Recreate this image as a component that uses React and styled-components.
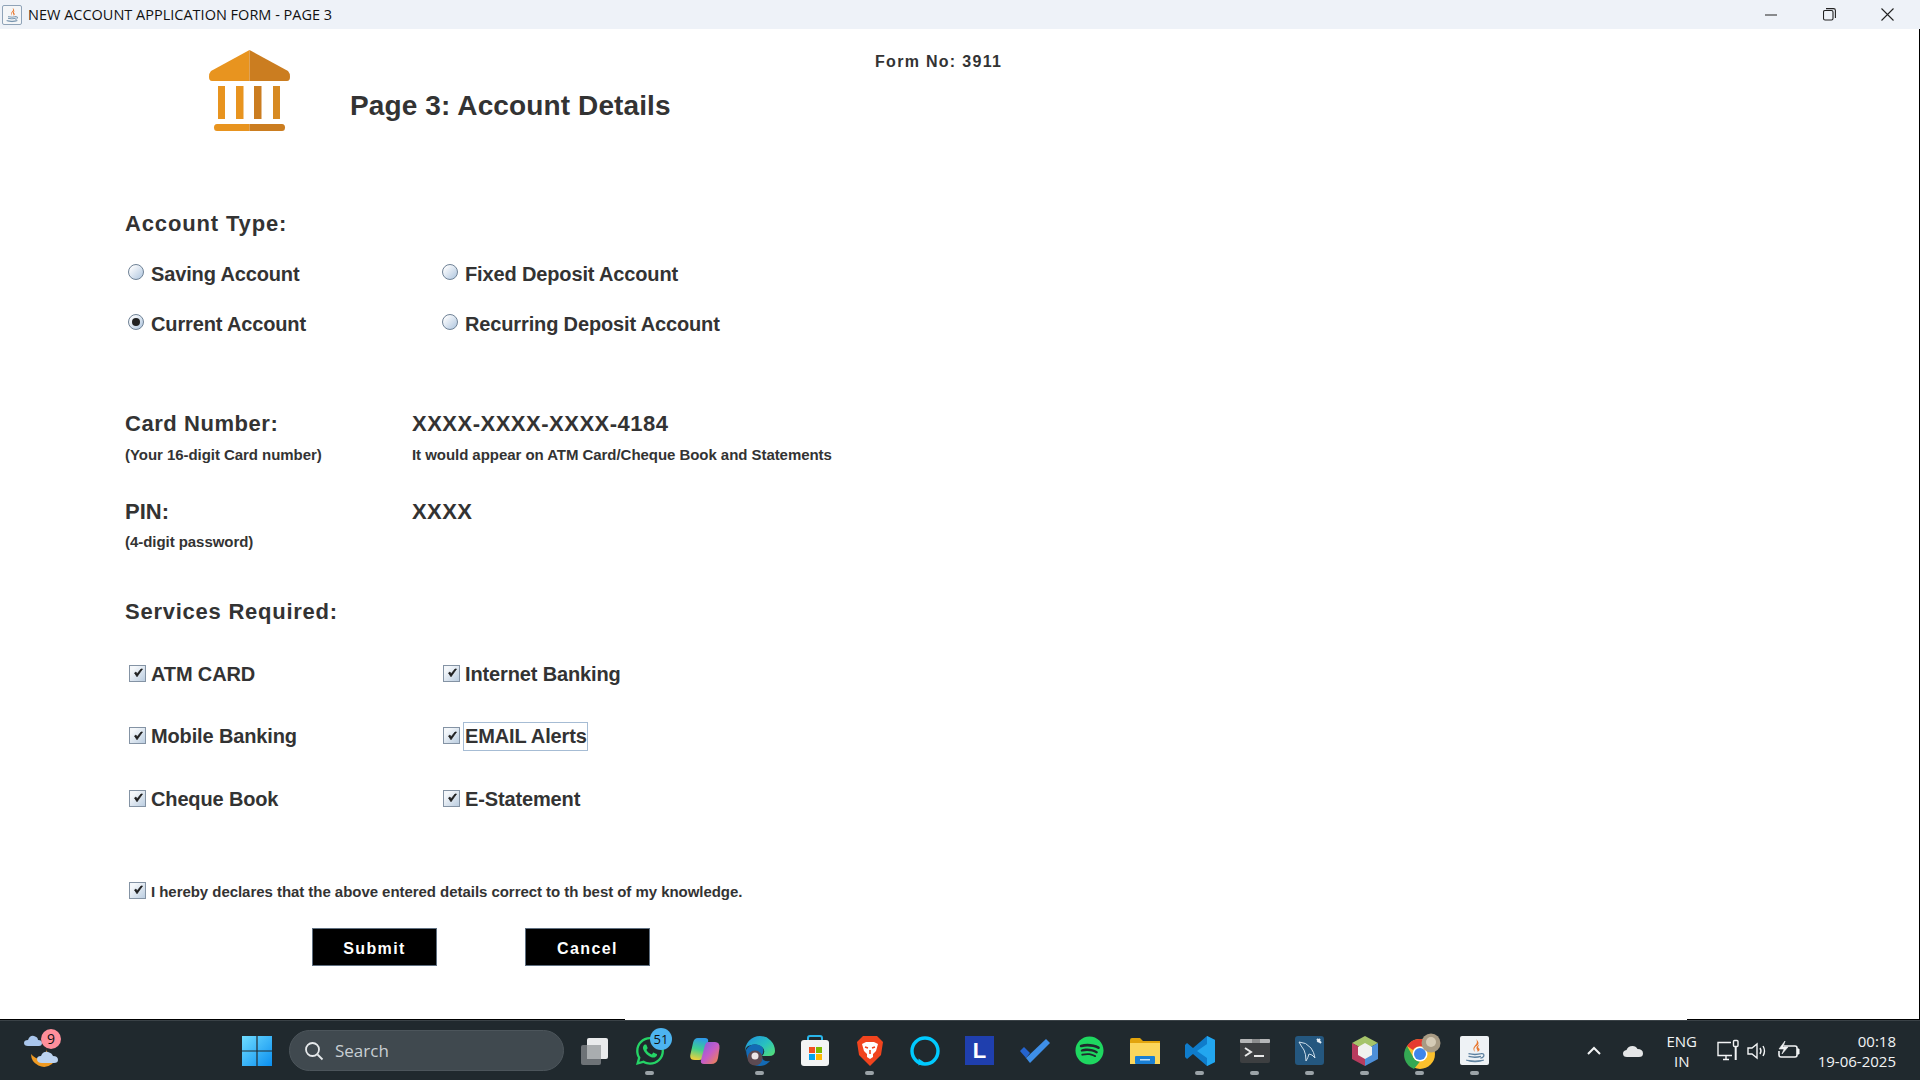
import React from 'react';
import styled, { createGlobalStyle } from 'styled-components';
import { FaWhatsapp, FaSpotify } from 'react-icons/fa';

const GlobalStyle = createGlobalStyle`
  html, body {
    margin: 0;
    padding: 0;
    background: #fff;
    overflow: hidden;
  }
`;

const Page = styled.div`
  width: 1920px;
  height: 1080px;
  display: flex;
  flex-direction: column;
  font-family: "Liberation Sans", Arial, sans-serif;
  background: #fff;
`;

const TitleBar = styled.div`
  height: 29px;
  flex: none;
  display: flex;
  align-items: center;
  background: #eef2f8;
  padding: 0 4px 0 2px;
`;

const TitleIcon = styled.div`
  width: 20px;
  height: 20px;
  display: flex;
  align-items: center;
  justify-content: center;
  background: #f4f6f8;
  border: 1px solid #8fa3b8;
  border-radius: 2px;
  box-sizing: border-box;
`;

const TitleText = styled.span`
  font-family: "Open Sans", sans-serif;
  font-size: 14.5px;
  color: #111;
  margin-left: 6px;
  flex: 1;
`;

const WinButton = styled.div`
  width: 58px;
  height: 29px;
  display: flex;
  align-items: center;
  justify-content: center;
`;

const Main = styled.div`
  flex: 1;
  border-right: 1px solid #000;
`;

const Header = styled.div`
  height: 180px;
  display: flex;
  align-items: flex-start;
  padding: 21px 0 0 209px;
  box-sizing: border-box;
`;

const Logo = styled.svg`
  width: 81px;
  height: 81px;
  flex: none;
`;

const PageTitle = styled.h1`
  margin: 40px 0 0 60px;
  font-size: 28px;
  line-height: 32px;
  font-weight: 700;
  color: #333;
  letter-spacing: 0.12px;
  width: 525px;
`;

const FormNo = styled.div`
  margin-top: 2px;
  font-size: 16px;
  line-height: 20px;
  font-weight: 700;
  color: #333;
  letter-spacing: 1.3px;
`;

const Form = styled.div`
  padding-left: 125px;
`;

const Heading = styled.div`
  height: 30px;
  line-height: 30px;
  margin-top: ${({ $top }) => $top || 0}px;
  font-size: 22px;
  font-weight: 700;
  color: #333;
  letter-spacing: ${({ $spacing }) => $spacing}px;
`;

const OptionGrid = styled.div`
  display: grid;
  grid-template-columns: 314px 1fr;
  grid-auto-rows: 30px;
  row-gap: ${({ $gap }) => $gap}px;
  margin-top: ${({ $top }) => $top}px;
`;

const Option = styled.div`
  display: flex;
  align-items: center;
  padding-left: 4px;
  font-size: ${({ $size }) => $size || 20}px;
  font-weight: 700;
  color: #333;
`;

const OptionLabel = styled.span`
  margin-left: ${({ $gap }) => $gap}px;
  white-space: nowrap;
  letter-spacing: ${({ $spacing }) => $spacing ?? -0.14}px;
  ${({ $boxed }) => $boxed && `
    border: 1px solid #a6bcd4;
    padding: 2px 0 2px 1px;
  `}
`;

const RadioDot = styled.span`
  width: 16px;
  height: 16px;
  margin: -5px 0 0 -1px;
  flex: none;
  border-radius: 50%;
  box-sizing: border-box;
  border: 1px solid #6f8296;
  background: linear-gradient(135deg, #f6f8fb 20%, #b2c8e0 95%);
  display: flex;
  align-items: center;
  justify-content: center;

  &::after {
    content: '';
    width: 8px;
    height: 8px;
    border-radius: 50%;
    background: ${({ $on }) => ($on ? '#222' : 'transparent')};
  }
`;

const CheckBox = styled.span`
  width: 17px;
  height: 17px;
  margin: -2px 0 0;
  flex: none;
  box-sizing: border-box;
  border: 1px solid #8493a4;
  background: linear-gradient(135deg, #f4f7fa 20%, #bfd0e2 95%);
  display: flex;
  align-items: center;
  justify-content: center;
`;

const DetailRow = styled.div`
  display: grid;
  grid-template-columns: 287px 1fr;
  height: 30px;
  align-items: center;
  margin-top: ${({ $top }) => $top}px;
`;

const DetailValue = styled.div`
  font-size: 22px;
  font-weight: 700;
  color: #333;
  letter-spacing: ${({ $spacing }) => $spacing}px;
`;

const NoteRow = styled.div`
  display: grid;
  grid-template-columns: 287px 1fr;
  height: 20px;
  align-items: center;
  margin-top: ${({ $top }) => $top}px;
  font-size: 15px;
  letter-spacing: -0.05px;
  font-weight: 700;
  color: #333;
`;

const ButtonRow = styled.div`
  display: flex;
  gap: 88px;
  margin: 22px 0 0 187px;
`;

const BlackButton = styled.button`
  width: 125px;
  height: 38px;
  padding: 4px 0 0;
  background: #000;
  border: 1px solid #5f6f80;
  color: #fff;
  font-family: inherit;
  font-size: 16px;
  font-weight: 700;
  letter-spacing: 1.4px;
`;

const BottomEdge = styled.div`
  height: 1px;
  flex: none;
  display: flex;
  justify-content: space-between;
  background: #fff;
`;

const EdgePiece = styled.div`
  width: ${({ $w }) => $w}px;
  background: #000;
`;

const TaskBar = styled.div`
  height: 60px;
  flex: none;
  box-sizing: border-box;
  border-top: 1px solid #3a4247;
  background: #20292e;
  display: flex;
  align-items: center;
  color: #fff;
  font-family: "Open Sans", sans-serif;
`;

const Weather = styled.div`
  position: relative;
  width: 42px;
  height: 40px;
  margin: 0 0 4px 22px;
  flex: none;
`;

const Badge = styled.span`
  position: absolute;
  top: ${({ $top }) => $top}px;
  right: ${({ $right }) => $right}px;
  min-width: ${({ $w }) => $w}px;
  height: ${({ $w }) => $w}px;
  border-radius: 50%;
  background: ${({ $bg }) => $bg};
  color: #111;
  font-size: ${({ $size }) => $size}px;
  line-height: ${({ $w }) => $w}px;
  text-align: center;
`;

const StartLogo = styled.svg`
  width: 30px;
  height: 30px;
  margin-left: 178px;
  flex: none;
`;

const SearchBox = styled.div`
  width: 275px;
  height: 41px;
  margin-left: 17px;
  box-sizing: border-box;
  padding-left: 14px;
  border-radius: 21px;
  border: 1px solid #4c555b;
  background: #40494f;
  display: flex;
  align-items: center;
  gap: 11px;
  font-size: 17px;
  color: #c9cfd3;
  flex: none;
`;

const AppList = styled.div`
  display: flex;
  margin-left: 3px;
  flex: none;
`;

const AppSlot = styled.div`
  position: relative;
  width: 55px;
  height: 59px;
  display: flex;
  align-items: center;
  justify-content: center;
`;

const RunDot = styled.span`
  position: absolute;
  bottom: 5px;
  left: 23px;
  width: 9px;
  height: 4px;
  border-radius: 2px;
  background: #9ba3a8;
`;

const Tile = styled.div`
  width: 29px;
  height: 29px;
  display: flex;
  align-items: center;
  justify-content: center;
  background: ${({ $bg }) => $bg};
  border-radius: ${({ $radius }) => $radius || 0}px;
  color: #fff;
  font-family: "Liberation Sans", sans-serif;
  font-weight: 700;
  font-size: 22px;
`;

const Tray = styled.div`
  margin-left: auto;
  display: flex;
  align-items: center;
  padding-right: 24px;
`;

const TrayIcon = styled.svg`
  width: ${({ $w }) => $w || 24}px;
  height: 24px;
  margin-right: ${({ $gap }) => $gap || 0}px;
  flex: none;
`;

const LangBlock = styled.div`
  width: 34px;
  margin-right: 17px;
  text-align: center;
  font-size: 15px;
  line-height: 20px;
  color: #f2f4f5;
`;

const Clock = styled.div`
  margin-left: 18px;
  text-align: right;
  font-size: 15px;
  line-height: 20px;
  color: #f2f4f5;
`;

const CheckMark = () => (
  <svg width="12" height="12" viewBox="0 0 12 12">
    <path d="M2.5 6 L5 9.8 L10.5 2 L9 2 L5 7 L4 5 Z" fill="#1d1d1d" stroke="#1d1d1d" strokeWidth="0.7" />
  </svg>
);

const Check = ({ label, boxed }) => (
  <Option>
    <CheckBox><CheckMark /></CheckBox>
    <OptionLabel $boxed={boxed} $gap={boxed ? 3 : 5}>{label}</OptionLabel>
  </Option>
);

const Radio = ({ label, on }) => (
  <Option>
    <RadioDot $on={on} />
    <OptionLabel $gap={7}>{label}</OptionLabel>
  </Option>
);

const BankLogo = () => (
  <Logo viewBox="0 0 81 81">
    <path d="M40.5 0 L2 21 Q0 23 0 27 Q0 31 3 31 L40.5 31 Z" fill="#e8941f" />
    <path d="M40.5 0 L79 21 Q81 23 81 27 Q81 31 78 31 L40.5 31 Z" fill="#cb7d20" />
    <rect x="9" y="36" width="7" height="33" fill="#e8941f" />
    <rect x="27" y="36" width="7.5" height="33" fill="#e8941f" />
    <rect x="45" y="36" width="7.5" height="33" fill="#cb7d20" />
    <rect x="64" y="36" width="7" height="33" fill="#d78a22" />
    <path d="M40.5 74 L8 74 Q5 74 5 77.5 Q5 81 8 81 L40.5 81 Z" fill="#e8941f" />
    <path d="M40.5 74 L73 74 Q76 74 76 77.5 Q76 81 73 81 L40.5 81 Z" fill="#cb7d20" />
  </Logo>
);

const WeatherIcon = () => (
  <svg width="42" height="40" viewBox="0 0 42 40">
    <path d="M9 25 A13 13 0 0 0 30 35 L34 30 A13 13 0 0 1 24 18 Q26 24 20 30 Q14 31 9 25 Z" fill="#ef9a22" />
    <path d="M20 34 Q15 34 15 30 Q15 27 19 27 Q21 22 26 23 Q30 24 31 27 Q36 27 36 31 Q36 34 32 34 Z" fill="#bcd3f0" />
    <path d="M6 17 Q2 17 2 14 Q2 11 6 11 Q8 6 12 7 Q16 8 16 11 Q20 11 20 14 Q20 17 17 17 Z" fill="#a9c6ec" />
  </svg>
);

const JavaCup = ({ size }) => (
  <svg width={size} height={size} viewBox="0 0 24 24">
    <path d="M13 1 Q15 4 12 7 Q9 10 12 13 Q10 9 14 7 Q17 5 13 1 Z" fill="#e8772e" />
    <path d="M16 6 Q12 8 14 11 Q15 12 14 13 Q18 11 15 9 Q14.5 8 16 6 Z" fill="#e8772e" />
    <path d="M6 14.5 Q12 16 18 14.5 M6 17 Q12 18.5 17.5 17 M17.5 14.5 Q21 14 20 17 Q19 18.5 17 18.5" fill="none" stroke="#5b7f9e" strokeWidth="1.2" />
    <path d="M4 20.5 Q12 23.5 20 20.5 Q12 22 4 20.5 Z" fill="#5b7f9e" stroke="#5b7f9e" strokeWidth="0.8" />
  </svg>
);

const TaskView = () => (
  <svg width="32" height="32" viewBox="0 0 32 32">
    <rect x="2" y="10" width="20" height="20" rx="2" fill="#6d7276" />
    <rect x="8" y="3" width="21" height="21" rx="2" fill="#e9ebec" />
    <rect x="8" y="10" width="14" height="14" fill="#a9adaf" />
  </svg>
);

const Copilot = () => (
  <svg width="30" height="26" viewBox="0 0 30 26">
    <defs>
      <linearGradient id="cpA" x1="0" y1="0" x2="1" y2="1">
        <stop offset="0" stopColor="#7a5fe0" />
        <stop offset="0.5" stopColor="#c65cc8" />
        <stop offset="1" stopColor="#f58a3c" />
      </linearGradient>
      <linearGradient id="cpB" x1="0.5" y1="0" x2="0.3" y2="1">
        <stop offset="0" stopColor="#2f9ae8" />
        <stop offset="0.5" stopColor="#3ed08f" />
        <stop offset="1" stopColor="#f4d03a" />
      </linearGradient>
    </defs>
    <path d="M8 0 H15 Q19 0 18 4 L14 19 Q13 22 9 22 H5 Q-1 22 0.5 16 L3 5 Q4 0 8 0 Z" fill="url(#cpB)" />
    <path d="M18 4 H25 Q30 4 29.5 10 L28 20 Q27 26 21 26 H14 Q10 26 11 22 L15 7 Q16 4 18 4 Z" fill="url(#cpA)" />
  </svg>
);

const Edge = () => (
  <svg width="30" height="30" viewBox="0 0 30 30">
    <defs>
      <linearGradient id="edA" x1="0" y1="0" x2="1" y2="0.8">
        <stop offset="0" stopColor="#1f8fe0" />
        <stop offset="0.6" stopColor="#28c0c0" />
        <stop offset="1" stopColor="#4fdc80" />
      </linearGradient>
    </defs>
    <path d="M15 0 A15 15 0 0 1 30 15 Q30 20 24 20 L17 20 Q21 16 18 12 Q12 6 3 10 Q0 12 0 16 A15 15 0 0 1 15 0 Z" fill="url(#edA)" />
    <path d="M1 14 Q6 6 14 9 Q21 12 17 19 Q16 26 25 25 Q21 30 15 30 Q2 30 1 14 Z" fill="#136ab5" />
    <circle cx="10" cy="22" r="7.5" fill="#5c4a52" />
    <circle cx="10" cy="20" r="3.5" fill="#ece6e8" />
  </svg>
);

const Store = () => (
  <svg width="30" height="32" viewBox="0 0 30 32">
    <path d="M8 6 V3 Q8 1 10 1 H20 Q22 1 22 3 V6" fill="none" stroke="#29b6ea" strokeWidth="2" />
    <rect x="1" y="5" width="28" height="26" rx="3" fill="#f3f4f4" />
    <rect x="9" y="12" width="6" height="6" fill="#f25022" />
    <rect x="16" y="12" width="6" height="6" fill="#7fba00" />
    <rect x="9" y="19" width="6" height="6" fill="#00a4ef" />
    <rect x="16" y="19" width="6" height="6" fill="#ffb900" />
  </svg>
);

const Brave = () => (
  <svg width="28" height="32" viewBox="0 0 28 32">
    <path d="M7 1 H21 L27 7 L25 20 L14 31 L3 20 L1 7 Z" fill="#f1441e" />
    <path d="M6 9 L10 7 H18 L22 9 L20 16 L17 19 L17 22 L14 24 L11 22 L11 19 L8 16 Z" fill="#fff" />
    <path d="M9 12 L12 13 M19 12 L16 13 M14 15 V19" stroke="#f1441e" strokeWidth="1.6" />
  </svg>
);

const Alexa = () => (
  <svg width="30" height="30" viewBox="0 0 30 30">
    <circle cx="15" cy="15" r="13" fill="none" stroke="#00caff" strokeWidth="3.4" />
    <path d="M8.5 29.5 L8.5 22.5 L14.5 26.5 Z" fill="#00caff" />
  </svg>
);

const Tasks = () => (
  <svg width="32" height="26" viewBox="0 0 32 26">
    <path d="M1 13 L5 9 L11 15 L7 20 Z" fill="#2564cf" />
    <path d="M7 20 L11 25 L31 5 L27 1 Z" fill="#3e8fe8" />
  </svg>
);

const Folder = () => (
  <svg width="32" height="28" viewBox="0 0 32 28">
    <path d="M1 3 Q1 1 3 1 H11 L14 4 H31 V27 H1 Z" fill="#e2a40c" />
    <rect x="1" y="6" width="30" height="21" fill="#fbd65c" />
    <rect x="6" y="19" width="20" height="8" rx="1" fill="#1a7fd4" />
    <rect x="11" y="22" width="10" height="1.5" fill="#bfe0fb" />
  </svg>
);

const VSCode = () => (
  <svg width="32" height="32" viewBox="0 0 32 32">
    <path d="M23 1 L31 5 V27 L23 31 L9 19 L3 24 L1 22 V10 L3 8 L9 13 Z" fill="#0f7ccb" />
    <path d="M23 1 L31 5 V27 L23 31 Z M23 9 L13 16 L23 23 Z" fill="#22a6ef" fillRule="evenodd" />
  </svg>
);

const Terminal = () => (
  <svg width="30" height="24" viewBox="0 0 30 24">
    <rect width="30" height="24" rx="2" fill="#3d3f41" />
    <rect width="30" height="4" rx="1" fill="#b5b6b7" />
    <rect x="12" width="8" height="4" fill="#8c8d8e" />
    <path d="M5 9 L11 13 L5 17" fill="none" stroke="#e8e8e8" strokeWidth="2" />
    <rect x="14" y="16" width="10" height="2" fill="#e8e8e8" />
  </svg>
);

const MySqlTile = () => (
  <svg width="29" height="29" viewBox="0 0 29 29">
    <rect width="29" height="29" rx="3" fill="#24577f" />
    <path d="M4 6 Q11 6 16 12 Q19 16 20 22 Q17 18 14 18 Q13 22 11 25 Q11 18 9 14 Q6 10 4 6 Z" fill="none" stroke="#cfe0ec" strokeWidth="1" />
    <path d="M22 3 L26 7 M25 3 L22.5 6" stroke="#e6eff6" strokeWidth="2" />
  </svg>
);

const NetBeans = () => (
  <svg width="28" height="32" viewBox="0 0 28 32">
    <path d="M14 1 L27 8 L14 15 L1 8 Z" fill="#a6c46a" />
    <path d="M1 8 L14 15 V31 L1 24 Z" fill="#b83b5e" />
    <path d="M27 8 L14 15 V31 L27 24 Z" fill="#4e8fd8" />
    <path d="M14 8 L21 12 V20 L14 24 L7 20 V12 Z" fill="#f1f1ee" />
  </svg>
);

const Chrome = () => (
  <svg width="42" height="36" viewBox="-6 0 42 36">
    <circle cx="15" cy="21" r="15" fill="#fbc02d" />
    <path d="M15 6 A15 15 0 0 1 28 13.5 H15 A7.5 7.5 0 0 0 8 17 L2 13 A15 15 0 0 1 15 6 Z" fill="#e53b30" />
    <path d="M2 13 L8.5 24.5 A7.5 7.5 0 0 0 15 28.5 L9 36 A15 15 0 0 1 2 13 Z" fill="#34a853" />
    <circle cx="15" cy="21" r="7.5" fill="#fff" />
    <circle cx="15" cy="21" r="6" fill="#3f86ea" />
    <circle cx="26" cy="10" r="9.5" fill="#a89b84" />
    <circle cx="26" cy="9" r="5" fill="#d5cbb6" />
  </svg>
);

const apps = [
  { key: 'task', icon: <TaskView /> },
  { key: 'whatsapp', icon: <FaWhatsapp color="#25d366" size={32} />, run: true, badge: '51' },
  { key: 'copilot', icon: <Copilot /> },
  { key: 'edge', icon: <Edge />, run: true },
  { key: 'store', icon: <Store /> },
  { key: 'brave', icon: <Brave />, run: true },
  { key: 'alexa', icon: <Alexa /> },
  { key: 'lens', icon: <Tile $bg="#1f3fae">L</Tile> },
  { key: 'tasks', icon: <Tasks /> },
  { key: 'spotify', icon: <FaSpotify color="#1ed760" size={29} /> },
  { key: 'folder', icon: <Folder /> },
  { key: 'vscode', icon: <VSCode />, run: true },
  { key: 'terminal', icon: <Terminal />, run: true },
  { key: 'mysql', icon: <MySqlTile />, run: true },
  { key: 'netbeans', icon: <NetBeans />, run: true },
  { key: 'chrome', icon: <Chrome />, run: true },
  { key: 'java', icon: <Tile $bg="#eef2f5" $radius={2}><JavaCup size={26} /></Tile>, run: true },
];

export default function App() {
  return (
    <Page>
      <GlobalStyle />
      <TitleBar>
        <TitleIcon><JavaCup size={16} /></TitleIcon>
        <TitleText>NEW ACCOUNT APPLICATION FORM - PAGE 3</TitleText>
        <WinButton>
          <svg width="12" height="12" viewBox="0 0 12 12">
            <path d="M0 6 H12" stroke="#222" strokeWidth="1" />
          </svg>
        </WinButton>
        <WinButton>
          <svg width="13" height="13" viewBox="0 0 13 13" fill="none" stroke="#222" strokeWidth="1.1">
            <rect x="0.5" y="2.5" width="9.5" height="9.5" rx="1.5" />
            <path d="M3 0.6 H10.5 Q12.4 0.6 12.4 2.5 V10" />
          </svg>
        </WinButton>
        <WinButton>
          <svg width="13" height="13" viewBox="0 0 13 13">
            <path d="M0.5 0.5 L12.5 12.5 M12.5 0.5 L0.5 12.5" stroke="#222" strokeWidth="1.1" />
          </svg>
        </WinButton>
      </TitleBar>

      <Main>
        <Header>
          <BankLogo />
          <PageTitle>Page 3: Account Details</PageTitle>
          <FormNo>Form No: 3911</FormNo>
        </Header>

        <Form>
          <Heading $spacing={0.85}>Account Type:</Heading>
          <OptionGrid $gap={20} $top={20}>
            <Radio label="Saving Account" />
            <Radio label="Fixed Deposit Account" />
            <Radio label="Current Account" on />
            <Radio label="Recurring Deposit Account" />
          </OptionGrid>

          <DetailRow $top={70}>
            <Heading $spacing={0.55}>Card Number:</Heading>
            <DetailValue $spacing={0.5}>XXXX-XXXX-XXXX-4184</DetailValue>
          </DetailRow>
          <NoteRow $top={5}>
            <span>(Your 16-digit Card number)</span>
            <span>It would appear on ATM Card/Cheque Book and Statements</span>
          </NoteRow>

          <DetailRow $top={33}>
            <Heading $spacing={0}>PIN:</Heading>
            <DetailValue $spacing={0.4}>XXXX</DetailValue>
          </DetailRow>
          <NoteRow $top={4}>
            <span>(4-digit password)</span>
          </NoteRow>

          <Heading $top={46} $spacing={0.75}>Services Required:</Heading>

          <OptionGrid $gap={32.5} $top={32}>
            <Check label="ATM CARD" />
            <Check label="Internet Banking" />
            <Check label="Mobile Banking" />
            <Check label="EMAIL Alerts" boxed />
            <Check label="Cheque Book" />
            <Check label="E-Statement" />
          </OptionGrid>

          <OptionGrid $gap={0} $top={62}>
            <Option $size={15}>
              <CheckBox><CheckMark /></CheckBox>
              <OptionLabel $gap={5} $spacing={-0.045}>
                I hereby declares that the above entered details correct to th best of my knowledge.
              </OptionLabel>
            </Option>
          </OptionGrid>

          <ButtonRow>
            <BlackButton>Submit</BlackButton>
            <BlackButton>Cancel</BlackButton>
          </ButtonRow>
        </Form>
      </Main>

      <BottomEdge>
        <EdgePiece $w={625} />
        <EdgePiece $w={233} />
      </BottomEdge>

      <TaskBar>
        <Weather>
          <WeatherIcon />
          <Badge $top={0} $right={3} $w={20} $bg="#ff8f9b" $size={14}>9</Badge>
        </Weather>

        <StartLogo viewBox="0 0 30 30">
          <defs>
            <linearGradient id="winA" x1="0" y1="0" x2="1" y2="1">
              <stop offset="0" stopColor="#6fdcff" />
              <stop offset="1" stopColor="#0a8ff0" />
            </linearGradient>
          </defs>
          <path d="M0 0 H14.4 V14.4 H0 Z M15.6 0 H30 V14.4 H15.6 Z M0 15.6 H14.4 V30 H0 Z M15.6 15.6 H30 V30 H15.6 Z" fill="url(#winA)" />
        </StartLogo>

        <SearchBox>
          <svg width="20" height="20" viewBox="0 0 20 20" fill="none" stroke="#e6e9eb" strokeWidth="1.8">
            <circle cx="8.5" cy="8.5" r="6.5" />
            <path d="M13.5 13.5 L18.5 18.5" />
          </svg>
          Search
        </SearchBox>

        <AppList>
          {apps.map((app) => (
            <AppSlot key={app.key}>
              {app.icon}
              {app.badge && <Badge $top={7} $right={5} $w={22} $bg="#4db4f0" $size={13}>{app.badge}</Badge>}
              {app.run && <RunDot />}
            </AppSlot>
          ))}
        </AppList>

        <Tray>
          <TrayIcon $gap={15} viewBox="0 0 24 24">
            <path d="M6 15 L12 9 L18 15" fill="none" stroke="#f2f4f5" strokeWidth="2" />
          </TrayIcon>
          <TrayIcon $gap={20} viewBox="0 0 24 24">
            <path d="M6 18 Q2 18 2 14.5 Q2 11.5 5.5 11 Q7 7 11.5 7 Q15 7 16.5 10 Q22 10 22 14.5 Q22 18 18 18 Z" fill="#e4e6e7" />
          </TrayIcon>
          <LangBlock>ENG<br />IN</LangBlock>
          <TrayIcon $gap={5} viewBox="0 0 24 24" fill="none" stroke="#f2f4f5" strokeWidth="1.4">
            <path d="M15 3.5 H2 V16.5 H16 M7 20.5 H13 M10 17 V20.5" />
            <rect x="17.5" y="1.5" width="4.5" height="6" rx="1" />
            <path d="M19.7 8 V21" strokeWidth="2" />
          </TrayIcon>
          <TrayIcon $gap={7} viewBox="0 0 24 24" fill="none" stroke="#f2f4f5" strokeWidth="1.4">
            <path d="M3 9 H7 L12 5 V19 L7 15 H3 Z" />
            <path d="M15 9 Q17 12 15 15 M18 7 Q21 12 18 17" />
          </TrayIcon>
          <TrayIcon viewBox="0 0 24 24" fill="none" stroke="#f2f4f5" strokeWidth="1.6">
            <path d="M8 7 H19 Q21 7 21 9 V16 Q21 18 19 18 H5 Q3 18 3 16 V12" />
            <path d="M21 10 H23 V15 H21" fill="#f2f4f5" strokeWidth="1" />
            <path d="M9 2 L3 10 H8 L6 15 L12 8 H7 Z" fill="#f2f4f5" strokeWidth="0.6" />
          </TrayIcon>
          <Clock>00:18<br />19-06-2025</Clock>
        </Tray>
      </TaskBar>
    </Page>
  );
}
